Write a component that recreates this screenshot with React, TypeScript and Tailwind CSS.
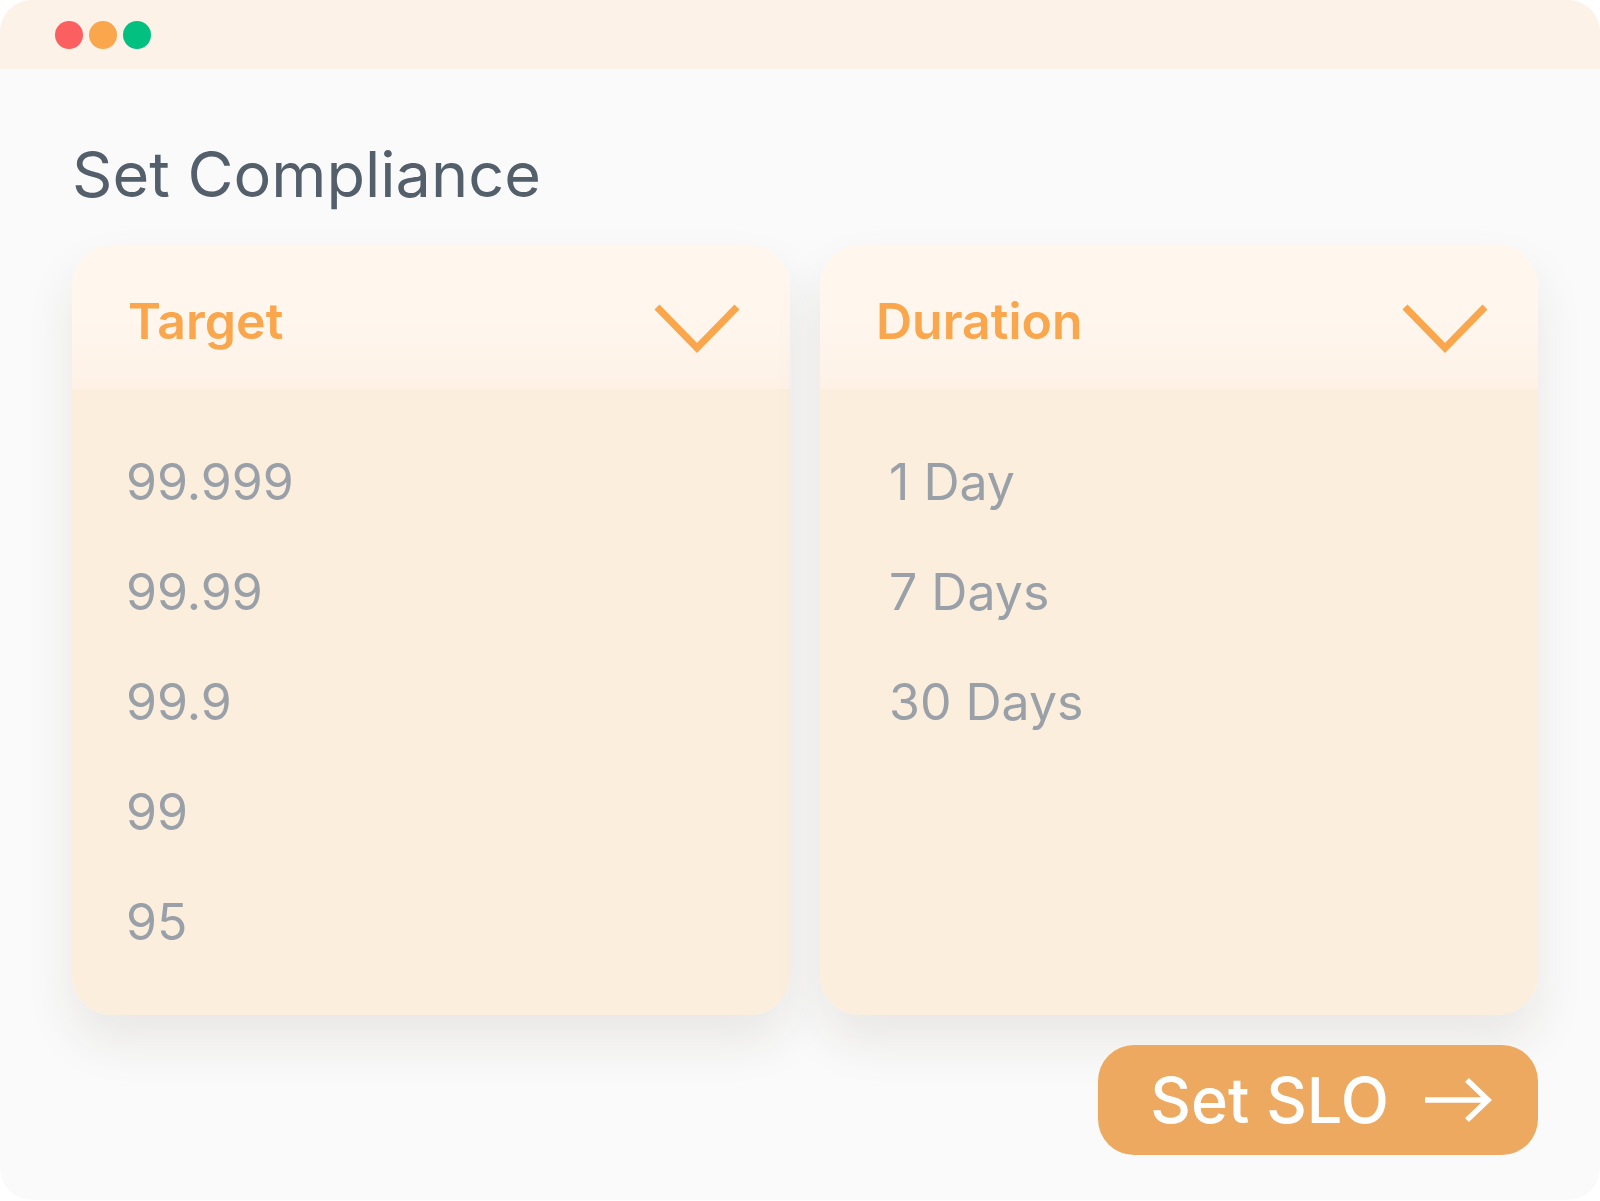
import React from 'react';

const targets = ['99.999', '99.99', '99.9', '99', '95'];
const durations = ['1 Day', '7 Days', '30 Days'];

const Chevron: React.FC = () => (
  <svg width="86" height="60" viewBox="0 0 86 60" className="shrink-0 mt-[6px]">
    <polyline
      points="3,13 43,54 83,13"
      fill="none"
      stroke="#f9a64c"
      strokeWidth="7"
      strokeLinejoin="miter"
    />
  </svg>
);

const Dropdown: React.FC<{ label: string; items: string[]; indent: string }> = ({ label, items, indent }) => (
  <div className="rounded-[40px] overflow-hidden shadow-[0_26px_50px_rgba(60,40,20,0.09)] flex flex-col">
    <div className="h-[144px] pl-[56px] pr-[50px] pt-[8px] flex items-center justify-between bg-gradient-to-b from-[#fff6ee] via-[#fff6ee] to-[#fef2e7]">
      <span className="text-[50px] font-semibold text-[#f9a64c] leading-[60px]">{label}</span>
      <Chevron />
    </div>
    <div className={`flex-1 bg-[#fbeedd] pt-[38px] pb-[38px] ${indent}`}>
      {items.map((item) => (
        <div key={item} className="h-[110px] leading-[110px] text-[50px] text-[#99a0a8]">
          {item}
        </div>
      ))}
    </div>
  </div>
);

const App: React.FC = () => {
  return (
    <div className="w-[1600px] h-[1201px] bg-white" style={{ fontFamily: 'Inter, "Noto Sans", sans-serif' }}>
      <div className="w-full h-[1200px] rounded-[32px] overflow-hidden bg-[#fafafa] flex flex-col">
        {/* title bar */}
        <div className="h-[69px] shrink-0 bg-[#fdf2e8] flex items-center gap-[6px] pl-[55px]">
          <span className="w-[28px] h-[28px] rounded-full bg-[#fb5f5f]" />
          <span className="w-[28px] h-[28px] rounded-full bg-[#f9a64c]" />
          <span className="w-[28px] h-[28px] rounded-full bg-[#02c080]" />
        </div>

        <h1 className="mt-[66px] ml-[72px] text-[63px] leading-[78px] font-normal text-[#545f6c]">
          Set Compliance
        </h1>

        <div className="mt-[32px] ml-[72px] w-[1466px] grid grid-cols-2 gap-[30px]">
          <Dropdown label="Target" items={targets} indent="pl-[54px]" />
          <Dropdown label="Duration" items={durations} indent="pl-[69px]" />
        </div>

        <div className="mt-[30px] ml-[72px] w-[1466px] flex justify-end">
          <button className="h-[110px] rounded-[36px] bg-[#eda95f] text-white flex items-center pl-[52px] pr-[45px] gap-[36px]">
            <span className="text-[63px] font-medium leading-[75px]">Set SLO</span>
            <svg width="68" height="46" viewBox="0 0 68 46" className="shrink-0">
              <line x1="0" y1="23" x2="63" y2="23" stroke="white" strokeWidth="5.5" />
              <polyline points="42,3 63,23 42,43" fill="none" stroke="white" strokeWidth="5.5" strokeLinejoin="miter" />
            </svg>
          </button>
        </div>
      </div>
    </div>
  );
};

export default App;
